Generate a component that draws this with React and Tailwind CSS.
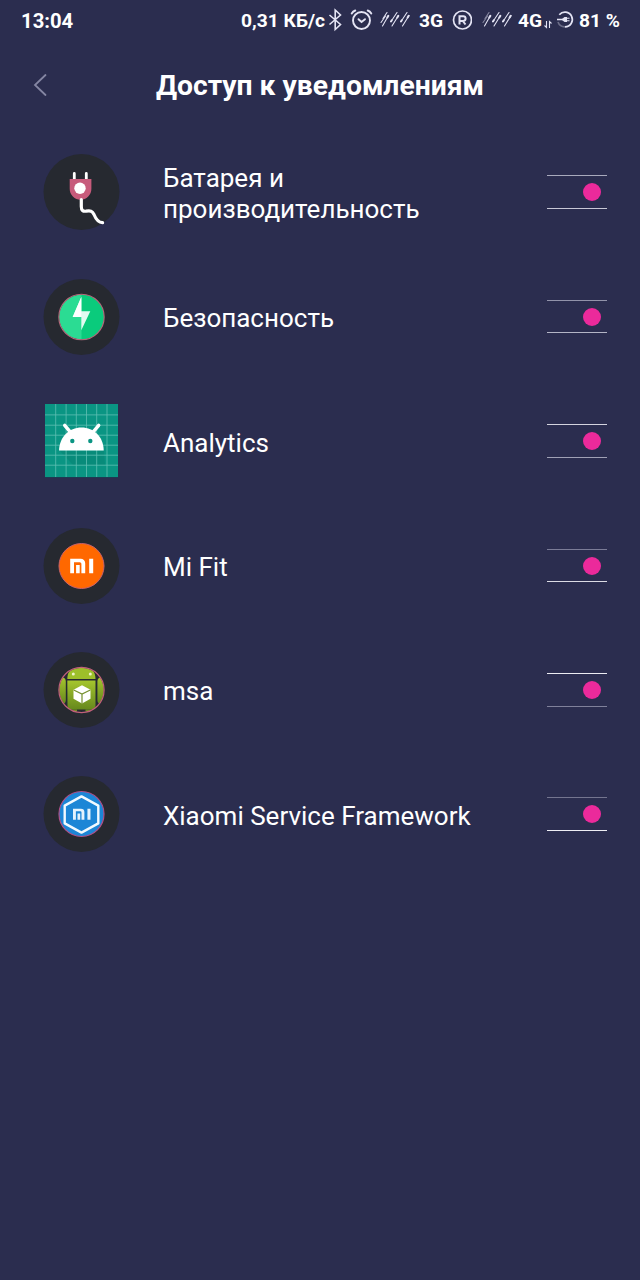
import { useState } from 'react';

const SignalIcon = ({ faded }) => (
  <svg className="w-8 h-5 shrink-0" viewBox="0 0 32 20" fill="none" stroke="#e4e4f4" strokeWidth="1.1" strokeLinecap="round">
    <g opacity={faded ? 0.5 : 1}>
      <path d="M7 2.500L3 8.500" />
      <path d="M1 12.500l4.500-6.500" />
    </g>
    <path d="M8.500 5.500L2.500 16" />
    <path d="M17 2.500L11 11.500M18.500 5.500L12 16M27 2.500L21 11.500M29 5.500L22.500 16" />
    <path d="M7.300 7.500l1-1.600M17.300 7.500l1-1.600M27.600 7.500l1-1.600M11 11.500l.8-1.200M21 11.500l.8-1.200" strokeWidth="2" />
  </svg>
);

const StatusBar = () => (
  <div className="flex items-center h-10 pl-[21px] text-[19.2px] font-bold text-white whitespace-nowrap">
    <span className="w-[220px] pt-0.5 text-[20.3px]">13:04</span>
    <span className="w-[87px] pt-0.5">0,31 КБ/с</span>
    <svg className="w-4 h-6 mr-1.5" viewBox="0 0 16 24" fill="none" stroke="#e4e4f4" strokeWidth="1.600">
      <path d="M1.500 7L12.500 16.500L7.200 21.500V2L12.500 7L1.500 16.500" />
    </svg>
    <svg className="w-6 h-6 mr-1.5" viewBox="0 0 24 24" fill="none" stroke="#e4e4f4" strokeWidth="1.900" strokeLinecap="round">
      <circle cx="11.500" cy="12.500" r="8.500" />
      <path d="M8.500 11.200l3 2.800 3.500-2.800" />
      <path d="M1.700 5.500C2.600 4 3.700 3.100 5.300 2.500M21.300 5.500C20.400 4 19.300 3.100 17.700 2.500" />
    </svg>
    <SignalIcon />
    <span className="w-[33px] ml-[7px] pt-0.5">3G</span>
    <svg className="w-5 h-5 mr-2.5" viewBox="0 0 20 20" fill="none" stroke="#e4e4f4">
      <circle cx="10.500" cy="10" r="9" strokeWidth="1.700" />
      <path d="M7.500 14.500V6.200h3.700a2.400 2.400 0 0 1 0 4.800H7.500M10.800 11l2.700 3.500" strokeWidth="2" />
    </svg>
    <SignalIcon faded />
    <span className="w-[25px] ml-[4px] pt-0.5">4G</span>
    <svg className="w-2.5 h-5 mr-[3px]" viewBox="0 0 10 20" fill="none" stroke="#e4e4f4" strokeWidth="1.100">
      <path d="M3.500 11v6.500L1.500 15.500M6.500 18v-6.500l2 2" />
    </svg>
    <svg className="w-5 h-5 mr-[3px]" viewBox="0 0 20 20" fill="none" stroke="#e4e4f4">
      <path d="M3.300 4.700A7.400 7.400 0 1 1 9 16.900" strokeWidth="1.700" />
      <path d="M9 16.900A7.400 7.400 0 0 1 2 12" strokeWidth="1.700" opacity=".35" />
      <path d="M1 9.500h6" strokeWidth="1.500" />
      <path d="M6 9l2.500-2h2.500v5H8.500L6 10zM11 7.800h2.500v.9H11zM11 10.300h2.500v.9H11z" fill="#e4e4f4" stroke="none" />
    </svg>
    <span className="pt-0.5">81 %</span>
  </div>
);

const Disc = () => <circle cx="39.500" cy="40" r="38" fill="#262930" />;

const MiMark = () => (
  <>
    <path d="M0 0h10.500a4.500 4.500 0 0 1 4.500 4.500v9.900h-3.800V5a1.600 1.600 0 0 0-1.600-1.600H3.800v11H0z" />
    <path d="M5.900 6.300h3.600v8.100H5.900zM19 0h4v14.400h-4z" />
  </>
);

const BatteryIcon = () => (
  <>
    <Disc />
    <path d="M32.300 28v-6.500M44.300 28v-6.500" stroke="#fff" strokeWidth="2.800" strokeLinecap="round" />
    <path d="M27.700 27h21.700v9.800a10.850 10.850 0 0 1-21.700 0z" fill="#c75b7b" />
    <circle cx="38" cy="36.300" r="5.700" fill="#fff" />
    <path d="M39.300 47.500v7c0 4 1.700 5 4.700 4.700 4.500-.8 6.300-.2 8 3.300 2 5 4 8 8.600 8.200" fill="none" stroke="#fff" strokeWidth="3.200" strokeLinecap="round" />
  </>
);

const SecurityIcon = () => (
  <>
    <Disc />
    <circle cx="39.500" cy="40" r="22.500" fill="#2bdc93" />
    <path d="M39.500 17.500a22.500 22.500 0 0 1 0 45z" fill="#0acb7c" />
    <circle cx="39.500" cy="40" r="22.700" fill="none" stroke="#b5687b" strokeWidth="1.100" />
    <path d="M39.300 20L30.700 40h8.600V53.300L48.300 34.300h-9z" fill="#e2fbf1" />
    <path d="M39.300 20L30.700 40h8.600z" fill="#fff" />
  </>
);

const AnalyticsIcon = () => (
  <>
    <path d="M3 3h73v74H3z" fill="#1d3a52" />
    <path d="M3 3h73v73H3z" fill="#0a9583" />
    <path d="M18 50l13 14h32l-1-14z" fill="#078575" opacity=".6" />
    <path
      d="M13.700 3v73M24.100 3v73M34.300 3v73M44.500 3v73M54.700 3v73M65 3v73M3 13.900h73M3 24.200h73M3 34.200h73M3 44.200h73M3 54.200h73M3 64.200h73"
      stroke="#5fbfb2"
      strokeWidth=".8"
    />
    <path d="M17 49.500C17.500 36 27 26.600 39.500 26.600S61.500 36 61.700 49.500z" fill="#fff" />
    <path d="M22.700 24.300l5.500 6.500M56.700 24.300l-5.500 6.500" stroke="#fff" strokeWidth="3.400" strokeLinecap="round" />
    <circle cx="30.300" cy="40" r="2.200" fill="#0a9583" />
    <circle cx="48.300" cy="40" r="2.200" fill="#0a9583" />
  </>
);

const MiFitIcon = () => (
  <>
    <Disc />
    <circle cx="39.500" cy="40" r="22.500" fill="#ff6800" stroke="#c9626a" strokeWidth="1" />
    <g transform="translate(28.200 32.800)" fill="#fff">
      <MiMark />
    </g>
  </>
);

const MsaIcon = () => (
  <>
    <defs>
      <linearGradient id="msa-green" x1="0" y1="0" x2="0" y2="1">
        <stop offset="0" stopColor="#a5c52e" />
        <stop offset="1" stopColor="#66881c" />
      </linearGradient>
      <clipPath id="msa-clip">
        <circle cx="39.500" cy="40" r="22.300" />
      </clipPath>
    </defs>
    <Disc />
    <g clipPath="url(#msa-clip)">
      <path d="M25.300 29C25.300 21 30 17.800 33 17.800h13c3.500 0 7.500 4 7.500 11.200z" fill="#9dbf2a" />
      <path d="M25.300 30.600h28.200v25a4 4 0 0 1-4 4h-20a4 4 0 0 1-4-4z" fill="url(#msa-green)" />
      <path d="M16 31.500a3.500 3.500 0 0 1 7.800 0v18.500a3.500 3.500 0 0 1-7.800 0zM55.400 31.500a3.500 3.500 0 0 1 7.800 0v18.500a3.500 3.500 0 0 1-7.800 0z" fill="url(#msa-green)" />
      <path d="M29.500 59.500h5.500v4h-5.500zM43.500 59.500h5.500v4h-5.500z" fill="#6f921e" />
    </g>
    <circle cx="31.300" cy="24" r="1.500" fill="#eef5c8" />
    <circle cx="48.300" cy="24" r="1.500" fill="#eef5c8" />
    <path d="M40 35.300l8.500 4.500v9L40 53.500l-8.500-4.700v-9z" fill="#fff" />
    <path d="M31.700 40L40 44l8.300-4M40 44v9.500" fill="none" stroke="#76902f" strokeWidth="1.200" />
    <circle cx="39.500" cy="40" r="22.600" fill="none" stroke="#c0607a" strokeWidth="1.200" />
  </>
);

const FrameworkIcon = () => (
  <>
    <Disc />
    <circle cx="39.500" cy="40" r="22.500" fill="#1c86d6" stroke="#b05088" strokeWidth="1.200" />
    <path d="M39.500 22.400l16.800 9.200v17.800L39.500 58.600l-16.800-9.200V31.600z" fill="none" stroke="#f2faff" strokeWidth="2.400" strokeLinejoin="round" />
    <g transform="translate(31 34.700) scale(.76)" fill="#e4f3fd">
      <MiMark />
    </g>
  </>
);

const apps = [
  { id: 1, nome: 'Батарея и производительность', Icon: BatteryIcon, linhas: 'h-[34px] border-t-[#a9aabd] border-b-[#c8c8d6]' },
  { id: 2, nome: 'Безопасность', Icon: SecurityIcon, linhas: 'h-[33px] border-t-[#9293aa] border-b-[#b4b5c6]' },
  { id: 3, nome: 'Analytics', Icon: AnalyticsIcon, linhas: 'h-[34px] border-t-[#d4d4df] border-b-[#a0a1b5]' },
  { id: 4, nome: 'Mi Fit', Icon: MiFitIcon, linhas: 'h-[33px] border-t-[#7b7c97] border-b-[#dcdce5]' },
  { id: 5, nome: 'msa', Icon: MsaIcon, linhas: 'h-[34px] border-t-[#ececf2] border-b-[#80819b]' },
  { id: 6, nome: 'Xiaomi Service Framework', Icon: FrameworkIcon, linhas: 'h-[34px] border-t-[#74758f] border-b-[#eeeef4]' },
];

const Toggle = ({ label, checked, onChange, linhas }) => (
  <button
    role="switch"
    aria-label={label}
    aria-checked={checked}
    onClick={onChange}
    className={`flex items-center w-[60px] px-1.5 border-y ${checked ? 'justify-end' : 'justify-start'} ${linhas}`}
  >
    <span className={`size-[18px] rounded-full ${checked ? 'bg-[#eb2a9b]' : 'bg-[#8a8ba3]'}`} />
  </button>
);

export default function App() {
  const [ativos, setAtivos] = useState(apps.map((app) => app.id));

  function handleToggle(id) {
    setAtivos(ativos.includes(id) ? ativos.filter((item) => item !== id) : [...ativos, id]);
  }

  return (
    <div className="w-[640px] h-[1280px] bg-[#2b2d4f] text-white font-[Roboto,sans-serif] overflow-hidden">
      <StatusBar />

      <header className="flex items-center h-[90px] px-8">
        <button className="w-5">
          <svg className="w-5 h-6" viewBox="0 0 20 24" fill="none" stroke="#8586a3" strokeWidth="1.800" strokeLinecap="round">
            <path d="M13.500 2L3 12l10.500 10" />
          </svg>
        </button>
        <h1 className="flex-1 pt-0.5 pr-5 text-center text-[28.3px] font-bold">Доступ к уведомлениям</h1>
      </header>

      <ul className="pt-[0.2px]">
        {apps.map(({ id, nome, Icon, linhas }) => (
          <li key={id} className="flex items-center h-[124.4px] pl-[42px] pr-[32.6px]">
            <svg className="size-20 shrink-0" viewBox="0 0 80 80">
              <Icon />
            </svg>
            <span className="w-[340px] ml-[41px] mr-auto pt-1 text-[26px] leading-[31px]">{nome}</span>
            <Toggle label={nome} checked={ativos.includes(id)} onChange={() => handleToggle(id)} linhas={linhas} />
          </li>
        ))}
      </ul>
    </div>
  );
}
